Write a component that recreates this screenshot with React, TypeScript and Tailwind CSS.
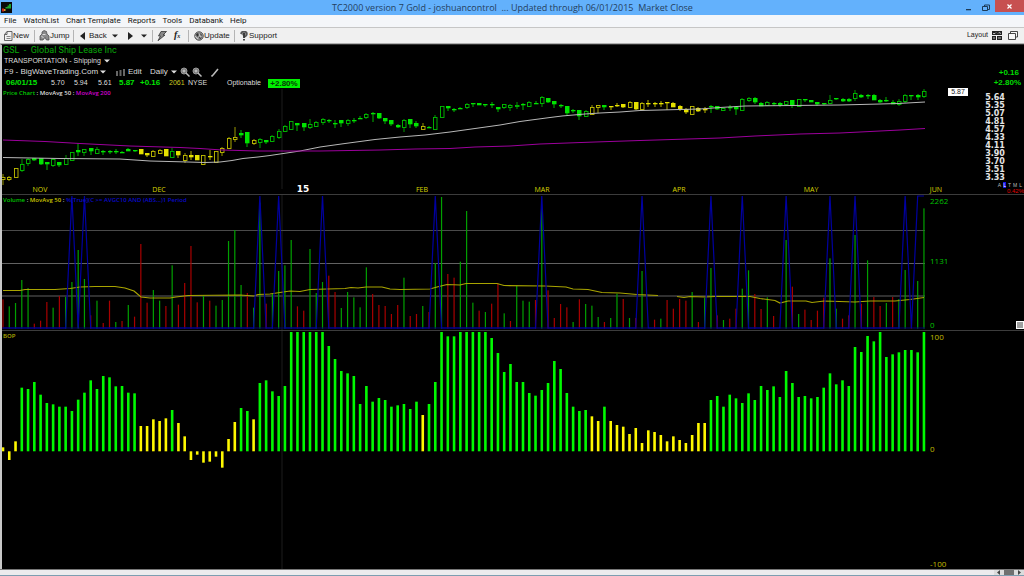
import React from "react";

const STEP = 6.265;
const barX = (i: number) => 3 + i * STEP;

const GREEN = "#00f000";
const YELLOW = "#f2ee00";

// g/y = hollow green/yellow, G/Y = filled; then high, top, bottom, low
const CANDLES =
  "y174,177,179,185 y176,177,179,181 y168,168,177,177 g159,164,170,172 g158,159,163,166 G158,158,160,161 G158,158,164,165 G162,162,164,170 g158,159,165,167 G162,162,165,167 g155,158,164,165 g152,152,160,160 G143,150,152,156 g149,149,152,156 G148,148,151,155 g147,149,153,154 G150,151,152,155 G150,151,152,154 G149,151,152,154 G151,152,153,153 G148,149,151,151 G150,150,151,152 " +
  "Y149,149,154,154 Y153,153,155,157 y150,151,156,156 y149,150,153,154 Y149,149,156,156 g148,151,157,157 Y151,151,155,158 y153,155,160,163 Y151,155,157,160 Y155,155,160,160 y155,155,164,165 Y150,156,157,160 y151,151,162,162 y147,148,152,156 y137,138,148,149 y127,137,139,142 G130,133,135,138 G132,132,143,147 y139,140,143,145 g138,139,142,148 G140,140,142,144 g135,136,141,142 g129,131,137,139 g125,126,131,132 " +
  "g121,121,129,130 G123,123,125,131 G123,123,127,131 g119,124,127,129 g121,122,126,127 g118,119,122,125 G119,120,121,123 G120,123,124,128 G120,120,123,127 g119,120,123,126 G118,120,121,123 G116,118,119,119 g113,114,117,119 G112,113,114,122 G113,113,118,119 G118,118,121,124 G120,120,124,126 G124,125,127,128 g119,120,127,132 G119,119,124,128 G121,123,126,128 y123,126,129,129 G126,127,128,128 g115,117,129,129 " +
  "g106,106,117,117 G106,106,108,111 G108,109,110,112 G107,108,109,109 g103,104,107,109 G103,103,104,107 G103,103,105,105 G104,104,105,107 G102,104,105,108 G107,107,109,112 g104,104,107,109 g104,105,107,111 g102,105,106,109 G103,104,105,110 g101,102,106,107 G101,103,104,104 g96,97,103,107 G98,98,102,103 G101,101,104,108 G104,105,106,108 G106,106,113,116 G109,110,111,113 G110,110,116,120 g110,111,116,117 " +
  "y105,107,114,114 y105,105,107,113 G105,105,107,110 Y106,106,107,110 Y103,105,106,107 Y104,104,107,108 y101,102,107,108 Y102,102,109,110 y102,103,109,109 Y100,103,104,107 Y102,103,104,107 Y101,103,104,107 Y102,102,103,110 Y102,103,107,107 Y105,106,109,111 Y108,109,112,114 y106,106,114,114 Y107,108,111,112 Y107,109,110,113 G105,106,107,113 G106,106,109,110 g108,108,110,110 G105,107,108,111 G106,107,109,115 " +
  "g98,99,110,110 g97,98,100,102 G97,98,102,104 G102,103,106,106 g101,102,105,106 G102,103,104,106 G102,103,105,107 g101,101,104,106 G100,100,105,108 g99,99,106,106 G99,99,100,102 G100,100,102,102 G102,102,104,106 G103,103,104,105 g95,100,103,104 G98,98,99,100 G98,99,101,102 G98,99,101,102 g90,93,98,101 G94,95,97,98 G94,95,96,99 G94,95,100,100 G99,100,102,103 G97,100,101,102 G100,102,104,104 g99,101,104,106 g94,95,101,103 G95,95,96,100 G94,95,97,100 g89,91,96,98";

// bar tops in thirds of a pixel, measured from y=190
const VOLUME =
  "r328 g349 g339 g270 g294 r401 r392 r336 g353 r318 g321 g276 g180 g267 r376 g332 r399 r332 g396 r393 g345 r380 r162 r338 g300 g332 r348 g226 r344 r279 r168 r337 g318 r332 g347 g330 g153 g120 g285 r309 g353 g38 r341 g312 g243 g226 g150 r349 " +
  "r362 g177 g309 g276 r257 r306 g354 g306 g322 g352 g232 r312 r345 r348 r372 r345 g263 r378 r372 g348 r366 g219 g21 r252 r263 g215 g63 g338 r362 g366 r341 r280 g370 r393 g287 g332 g335 r330 g56 r301 r384 r342 r352 g396 r328 g342 g347 g381 r396 g384 g311 " +
  "r327 g384 r384 g243 r416 r389 g386 r330 r356 r327 r332 g306 r396 g324 g234 r376 g390 r386 r356 g296 g241 r312 r357 g322 r378 g416 g150 r290 g372 r359 r390 r362 r323 g205 g356 r386 r376 g135 r341 g211 r321 r348 g339 r321 g327 g240 r376 g273 g55";

// bar ends in thirds of a pixel, measured from y=326, zero line at 375
const BOP =
  "y364 y402 y346 g185 g189 g168 g206 g231 g235 g242 g242 g255 g221 g200 g163 g189 g150 g154 g181 g180 g200 g202 y300 y300 y280 y285 y277 g252 y291 y331 y402 y386 y410 y407 y392 y425 y339 y288 g246 g255 y280 g171 g163 g196 g210 g180 g18 g18 g18 g18 g18 g18 g60 g99 g135 g142 g150 g234 g180 g227 g216 g222 g242 g238 g234 g249 g227 y267 g234 g168 g18 g31 g31 g18 g18 " +
  "g18 g18 g18 g36 g81 g138 g114 g168 g168 g201 g209 g192 g171 g105 g129 g201 g242 g255 g252 y271 y285 g242 y285 y297 y302 y324 y306 y351 y313 y318 y327 y346 y331 y342 y351 y327 y291 y291 g222 g210 g242 g206 g217 g231 g202 g222 g180 g192 g181 g213 g135 g171 g213 g210 g217 g213 g185 g142 g175 g163 g180 g63 g78 g30 g46 g18 g93 g85 g79 g72 g72 g79 g18";

const SIGNALS = [11, 13, 41, 44, 51, 69, 86, 102, 113, 118, 125, 132, 136, 144, 146, 147];

const MA50 =
  "3,157.5 60,158.5 120,159 135,160 150,161 188,162 205,162.5 220,162 232,160.5 243,158.5 258,157 270,155.5 300,151 320,147 345,143.5 375,139.5 400,137 425,135 450,132 475,128.5 500,125 520,121.5 550,117.5 562,116 585,114 600,113 620,112 640,110.5 700,109 720,107.5 745,106 840,105 880,104 898,103.5 925,102";
const MA200 =
  "3,140 45,141.5 80,143.5 130,146 180,147.5 200,148.5 222,150 258,151 320,151 380,150 415,149 450,148.5 475,147 510,146 540,144 595,142 640,140.5 720,138 755,136 800,134 840,133 870,131.5 900,130 925,128.5";
const VOL_MA = [
  "3,290.5 20,290.5 25,289.5 55,289.5 70,288.5 80,287 95,286.5 115,286.5 125,288 134,291 141,297 150,298 170,298 176,297 188,295.5 240,295 254,296 258,294.5 270,294 280,292.5 290,291 300,291.5 310,289.5 345,288.5 351,287.5 358,288 366,287 382,287 390,289 400,289.5 430,289 437,287 447,284.5 460,285 466,283.5 497,283.5 504,285.5 545,286 566,287 573,289 588,289.5 602,292.5 620,293 637,294.5 658,295.5",
  "677,296.5 684,297.5 690,296.5 705,297 715,296.5 750,296.5 760,298.5 775,300.5 780,303 788,301 806,301 812,302.5 824,301 855,302 870,301 895,301 910,299.5 924,297.5",
];

const MONTHS = [
  { label: "NOV", x: 40 },
  { label: "DEC", x: 159 },
  { label: "FEB", x: 422 },
  { label: "MAR", x: 542 },
  { label: "APR", x: 679 },
  { label: "MAY", x: 811 },
  { label: "JUN", x: 936 },
];
const PRICES = ["5.64", "5.35", "5.07", "4.81", "4.57", "4.33", "4.11", "3.90", "3.70", "3.51", "3.33"];
const MENU = ["File", "WatchList", "Chart Template", "Reports", "Tools", "Databank", "Help"];

const Plot = ({ top, height, children }: { top: number; height: number; children: React.ReactNode }) => (
  <svg
    viewBox={`2 ${top} 926 ${height}`}
    preserveAspectRatio="none"
    className="absolute inset-0 h-full w-full"
    aria-hidden="true"
  >
    {children}
  </svg>
);

const Caret = () => (
  <svg width="6" height="4" viewBox="0 0 6 4" aria-hidden="true">
    <path d="M0 0.5h6L3 3.5z" fill="currentColor" />
  </svg>
);

const Magnifier = () => (
  <svg width="10" height="10" viewBox="0 0 10 10" aria-hidden="true">
    <circle cx="4" cy="4" r="3" fill="#777" stroke="#999" strokeWidth="1" />
    <path d="M2.5 4h3M4 2.5v3" stroke="#ddd" strokeWidth="0.8" />
    <path d="M6 6l3.5 3.5" stroke="#bbb" strokeWidth="1.5" />
  </svg>
);

const Divider = () => <span className="h-3 w-px bg-[#b4b4b4]" />;

const TitleBar = () => (
  <header className="flex h-[15px] items-center bg-[#63b1fc]">
    <div className="flex flex-1 pl-px">
      <svg width="11" height="11" viewBox="0 0 11 11" aria-hidden="true">
        <rect width="11" height="11" fill="#0a0a0a" />
        <path d="M1 6.5h2v3H1z" fill="#c8281e" />
        <path d="M3 7h1.500v2H3z" fill="#d8a020" />
        <path d="M4.500 5h2v-1.500h1.500V2h2v4.500h-5.500z" fill="#1da32c" />
      </svg>
    </div>
    <h1 className="font-['Open_Sans','Noto_Sans',sans-serif] text-[9px] leading-[14px] whitespace-pre text-[#23405c]">
      TC2000 version 7 Gold - joshuancontrol  ... Updated through 06/01/2015  Market Close
    </h1>
    <div className="flex h-full flex-1 justify-end">
      <button aria-label="Minimize" className="flex w-4 items-center justify-center">
        <svg width="6" height="8" viewBox="0 0 6 8"><path d="M0 5h5v1.300H0z" fill="#1d3b57" /></svg>
      </button>
      <button aria-label="Restore" className="flex w-[18px] items-center justify-center">
        <svg width="8" height="8" viewBox="0 0 8 8" fill="none" stroke="#1d3b57">
          <path d="M2.500 2.500v-1.500h5v4.500h-2" />
          <path d="M0.500 2.500h5v4h-5z" />
        </svg>
      </button>
      <button aria-label="Close" className="mb-[3px] flex w-[29px] items-center justify-center bg-[#c75050]">
        <svg width="5" height="5" viewBox="0 0 5 5"><path d="M0.500 0.500l4 4M4.500 0.500l-4 4" stroke="#fff" strokeWidth="1.200" /></svg>
      </button>
    </div>
  </header>
);

const MenuBar = () => (
  <nav className="flex h-[13px] items-center gap-[7px] border-b border-[#c6c6c6] bg-[#f4f6f9] pl-1 font-[Roboto,'Noto_Sans',sans-serif] text-[8px] text-[#151515]">
    {MENU.map((item) => (
      <button key={item}>{item}</button>
    ))}
  </nav>
);

const Toolbar = () => (
  <div className="flex h-4 items-center border-b border-[#b0b0b0] bg-[#f0f0f0] pr-[6px] pl-1 text-[8px] text-[#222]">
    <button className="flex w-[30px] items-center">
      <svg width="9" height="10" viewBox="0 0 9 10" fill="none" stroke="#555">
        <path d="M3 0.500h5v9H0.500V3.500zM3 0.500v3H0.500" strokeWidth="0.900" />
        <path d="M2.500 5.500h4M2.500 7.500h4" strokeWidth="0.700" />
      </svg>
      New
    </button>
    <Divider />
    <button className="ml-1 flex w-[34px] items-center">
      <svg width="11" height="11" viewBox="0 0 11 11">
        <path d="M1 10V6l2-2V2l2-1.500 2.500 1L8 4l2 2v4H7.500L6 7.500 4 10z" fill="#8b8b8b" stroke="#444" strokeWidth="0.700" />
        <path d="M3.500 4.500h3M2.500 6.500l2 1" stroke="#fff" strokeWidth="0.700" />
      </svg>
      Jump
    </button>
    <Divider />
    <button className="ml-[6px] flex w-8 items-center gap-1">
      <svg width="5" height="8" viewBox="0 0 5 8"><path d="M5 0v8L0 4z" fill="#222" /></svg>
      Back
    </button>
    <button aria-label="Back history" className="w-4"><Caret /></button>
    <button aria-label="Forward" className="w-[13px]">
      <svg width="5" height="8" viewBox="0 0 5 8"><path d="M0 0v8L5 4z" fill="#222" /></svg>
    </button>
    <button aria-label="Forward history" className="w-[11px]"><Caret /></button>
    <Divider />
    <button aria-label="Quick action" className="ml-1 w-[17px]">
      <svg width="10" height="10" viewBox="0 0 10 10">
        <path d="M4 0.500h5.500L6 4h2L1 9.700 3.500 5H1.500z" fill="#888" stroke="#333" strokeWidth="0.800" />
      </svg>
    </button>
    <button aria-label="Formula" className="w-[14px] text-left font-['Liberation_Serif',serif] text-[10px] leading-3 font-bold italic">
      f<span className="text-[6px]">x</span>
    </button>
    <Divider />
    <button className="ml-[5px] flex w-10 items-center">
      <svg width="10" height="10" viewBox="0 0 10 10">
        <circle cx="5" cy="5" r="4.300" fill="#999" stroke="#444" strokeWidth="0.800" />
        <path d="M2 3l2-1 1 2-2 2zM6 2l2 2-1 1zM5 6l3 0-2 2.500z" fill="#333" />
        <path d="M1 5l3 3M5 3l2 4" stroke="#eee" strokeWidth="0.600" />
      </svg>
      Update
    </button>
    <Divider />
    <button className="ml-[5px] flex items-center gap-px">
      <svg width="8" height="10" viewBox="0 0 8 10">
        <path d="M1 3q0-2.500 3-2.500T7 3Q7 5 4.500 6" fill="#888" stroke="#555" strokeWidth="1.600" />
        <path d="M4 2v5M4 8v1.500" stroke="#333" strokeWidth="1.800" />
      </svg>
      Support
    </button>
    <span className="flex-1" />
    <button className="mr-1 flex items-center gap-1 text-[7px]">
      Layout
      <svg width="10" height="9" viewBox="0 0 10 9">
        <path d="M0 0h10v4H0zM0 5h4v4H0zM5 5h5v4H5z" fill="#222" />
        <path d="M1 2.500h2l1-1M6 2.500l1-1 2 1M1 7h2M6 7h3" stroke="#ddd" strokeWidth="0.800" fill="none" />
      </svg>
    </button>
    <button aria-label="Windows" className="ml-[2px]">
      <svg width="10" height="9" viewBox="0 0 10 9" fill="#f8f8f8" stroke="#333" strokeWidth="0.900">
        <path d="M2.500 0.500h7v5.500h-7z" />
        <path d="M0.500 2.500h7v6h-7z" />
      </svg>
    </button>
  </div>
);

const PriceHeader = () => (
  <div className="relative pl-px text-[#dedede]">
    <h2 className="font-[Roboto,sans-serif] text-[9px] leading-[10px] whitespace-pre text-[#0aa80a]">GSL  -  Global Ship Lease Inc</h2>
    <button className="flex items-center gap-[3px] pl-px text-[7px] leading-[11px]">
      TRANSPORTATION - Shipping <Caret />
    </button>
    <div className="flex h-3 items-center pl-px text-[8px]">
      <button className="flex w-28 items-center gap-[2px]">
        F9 - BigWaveTrading.Com <Caret />
      </button>
      <button className="flex w-[34px] items-center gap-[3px]">
        <svg width="9" height="7" viewBox="0 0 9 7" fill="#666" aria-hidden="true">
          <path d="M0 2h2v5H0zM3.500 1h2v6h-2zM7 0h2v7H7z" />
        </svg>
        Edit
      </button>
      <button className="flex w-[30px] items-center gap-[3px]">
        Daily <Caret />
      </button>
      <button aria-label="Zoom in" className="w-3"><Magnifier /></button>
      <button aria-label="Zoom out" className="w-[19px]"><Magnifier /></button>
      <button aria-label="Draw">
        <svg width="8" height="9" viewBox="0 0 8 9"><path d="M0.500 8.500l2-2L7 1" stroke="#bbb" strokeWidth="1.600" fill="none" /></svg>
      </button>
    </div>
    <div className="flex h-[10px] items-center pl-[3px] text-[7px]">
      <span className="w-[45px] text-[8px] font-bold text-[#00e600]">06/01/15</span>
      <span className="w-[23px]">5.70</span>
      <span className="w-6">5.94</span>
      <span className="w-[21px]">5.61</span>
      <span className="w-[21px] text-[8px] font-bold text-[#00e600]">5.87</span>
      <span className="w-[29px] text-[8px] font-bold text-[#00e600]">+0.16</span>
      <span className="w-[19px] text-[#c8c820]">2061</span>
      <span className="w-[39px]">NYSE</span>
      <span className="w-[41px]">Optionable</span>
      <span className="w-8 bg-[#00f000] text-center text-[8px] leading-[9px] font-bold text-[#063806]">+2.80%</span>
    </div>
    <p className="font-['Open_Sans',sans-serif] text-[6px] leading-[10px] font-semibold whitespace-pre">
      <span className="text-[#00c800]">Price Chart</span> : MovAvg 50 : <span className="text-[#d000d0]">MovAvg 200</span>
    </p>
  </div>
);

const PricePanel = () => (
  <section className="flex h-[150px] border-b border-[#3c3c3c]">
    <div className="relative flex-1">
      <Plot top={45} height={149}>
        <path d="M282 89V189" stroke="#0e0e0e" strokeWidth="2" />
        {CANDLES.split(" ").map((candle, i) => {
          const kind = candle[0];
          const [high, top, bottom, low] = candle.slice(1).split(",").map(Number);
          const color = kind.toLowerCase() === "g" ? GREEN : YELLOW;
          const hollow = kind === kind.toLowerCase();
          const x = Math.round(barX(i));
          const h = Math.max(bottom - top, 1);
          return (
            <g key={i} opacity={hollow ? 0.8 : 0.95}>
              <path d={`M${x} ${high}V${top}M${x} ${bottom}V${low}`} stroke={color} strokeWidth="0.8" />
              {hollow ? (
                <rect x={x - 1.5} y={top + 0.5} width="3.500" height={h} fill="none" stroke={color} strokeWidth="0.9" />
              ) : (
                <rect x={x - 2} y={top} width="4.500" height={h + 0.3} fill={color} />
              )}
            </g>
          );
        })}
        <polyline points={MA50} fill="none" stroke="#b8b8b8" />
        <polyline points={MA200} fill="none" stroke="#9c009c" />
      </Plot>
      <PriceHeader />
      {MONTHS.map(({ label, x }) => (
        <span
          key={label}
          className="absolute bottom-0 -translate-x-1/2 font-['Open_Sans',sans-serif] text-[7px] leading-[9px] text-[#d8d400]"
          style={{ left: `${((x - 2) / 926) * 100}%` }}
        >
          {label}
        </span>
      ))}
      <span
        className="absolute bottom-0 -translate-x-1/2 font-['DejaVu_Sans',sans-serif] text-[9px] leading-[9px] font-bold text-white"
        style={{ left: `${(301 / 926) * 100}%` }}
      >
        15
      </span>
    </div>
    <div className="flex w-24 flex-col text-[8px]">
      <div className="pt-[23px] pr-[3px] text-right leading-[10px] font-bold text-[#00dc00]">
        <p className="pr-[2px]">+0.16</p>
        <p>+2.80%</p>
      </div>
      <div className="flex h-[6px]">
        <span className="ml-5 h-[8px] w-5 bg-white text-center text-[7px] leading-[8px] text-[#222]">5.87</span>
      </div>
      <ul className="pl-[48px] font-['DejaVu_Sans',sans-serif] text-[8px] leading-[8px] font-bold text-[#e4e4e4]">
        {PRICES.map((price) => (
          <li key={price} className="w-[38px] text-center">{price}</li>
        ))}
      </ul>
      <div className="flex justify-end gap-[2px] pr-[2px] text-[5px] leading-[6px] text-[#bbb]">
        <button>A</button>
        <button className="bg-[#1414e6] text-white">L</button>
        <button>T</button>
        <button>M</button>
        <button>L</button>
      </div>
      <p className="text-right text-[6px] leading-[6px] text-[#e00000]">0.42%</p>
    </div>
  </section>
);

const VolumePanel = () => {
  let signal = "";
  for (let i = 0; i < 148; i++) {
    signal += `${barX(i)},${SIGNALS.includes(i) ? 196 : 328} `;
  }
  return (
    <section className="flex h-[136px] border-b border-[#3c3c3c]">
      <div className="relative flex-1">
        <Plot top={195} height={135}>
          <path d="M282 195V330" stroke="#0e0e0e" strokeWidth="2" />
          <path d="M2 230.500H925" stroke="#4a4a4a" />
          <path d="M2 263.500H925" stroke="#626262" />
          <path d="M2 296H925" stroke="#303030" strokeWidth="2" />
          {VOLUME.split(" ").map((bar, i) => {
            const top = 190 + Number(bar.slice(1)) / 3;
            return (
              <rect
                key={i}
                x={barX(i) - 0.6}
                y={top}
                width="1.200"
                height={328.7 - top}
                fill={bar[0] === "g" ? "#00a000" : "#a80000"}
              />
            );
          })}
          {VOL_MA.map((points) => (
            <polyline key={points} points={points} fill="none" stroke="#a8a400" strokeWidth="1.200" />
          ))}
          <path d="M2 328H925" stroke="#000070" strokeWidth="1.200" />
          <polyline points={signal} fill="none" stroke="#0000a0" strokeWidth="1.200" />
        </Plot>
        <p className="relative pl-px font-['Open_Sans',sans-serif] text-[6px] leading-[10px] font-semibold whitespace-pre text-[#c8c8c8]">
          <span className="text-[#00c800]">Volume</span> : <span className="text-[#c8c400]">MovAvg 50</span> :{" "}
          <span className="text-[#0a0ac8]">%[True](C &gt;= AVGC10 AND (ABS...)1 Period</span>
        </p>
      </div>
      <div className="flex w-24 flex-col justify-between pt-px pl-[2px] font-['Open_Sans',sans-serif] text-[8px] leading-[10px] text-[#00c000]">
        <span>2262</span>
        <span className="pb-1">1131</span>
        <div className="flex items-center justify-between">
          <span>0</span>
          <button aria-label="Resize panel" className="size-2 border border-white bg-[#a0a0a0]" />
        </div>
      </div>
    </section>
  );
};

const BopPanel = () => (
  <section className="flex min-h-[238px] flex-1">
    <div className="relative flex-1">
      <Plot top={331} height={238}>
        <path d="M282 331V569" stroke="#0e0e0e" strokeWidth="2" />
        {BOP.split(" ").map((bar, i) => {
          const end = 326 + Number(bar.slice(1)) / 3;
          return (
            <rect
              key={i}
              x={barX(i) - 1.3}
              y={Math.min(end, 451.3)}
              width="2.600"
              height={Math.abs(451.3 - end)}
              fill={bar[0] === "g" ? "#00fa00" : "#fff800"}
            />
          );
        })}
      </Plot>
      <p className="relative pl-px font-['Open_Sans',sans-serif] text-[6px] leading-[10px] font-semibold text-[#b0ac00]">BOP</p>
    </div>
    <div className="flex w-24 flex-col justify-between pt-px pl-[2px] font-['Open_Sans',sans-serif] text-[8px] leading-[10px] text-[#c0bc00]">
      <span>100</span>
      <span className="pb-1">0</span>
      <span>-100</span>
    </div>
  </section>
);

const BottomStrip = () => (
  <footer className="flex h-[7px] justify-end border-t border-b border-t-[#777] border-b-[#7d9db0] bg-[#ecebed]">
    <div className="flex w-[30px] items-center justify-between bg-[#dcdcdc] text-[#444]">
      <button aria-label="Scroll left" className="flex w-[9px] justify-center">
        <svg width="3" height="5" viewBox="0 0 3 5"><path d="M3 0v5L0 2.500z" fill="currentColor" /></svg>
      </button>
      <span className="h-full w-[10px] bg-[#707070]" />
      <button aria-label="Scroll right" className="flex w-[9px] justify-center">
        <svg width="3" height="5" viewBox="0 0 3 5"><path d="M0 0v5L3 2.500z" fill="currentColor" /></svg>
      </button>
    </div>
  </footer>
);

const App = () => (
  <div className="flex min-h-screen flex-col bg-black font-['Liberation_Sans',Arial,sans-serif]">
    <TitleBar />
    <MenuBar />
    <Toolbar />
    <main className="flex flex-1 flex-col border-t border-l-2 border-t-[#333] border-l-[#c8c8c8]">
      <PricePanel />
      <VolumePanel />
      <BopPanel />
    </main>
    <BottomStrip />
  </div>
);

export default App;
